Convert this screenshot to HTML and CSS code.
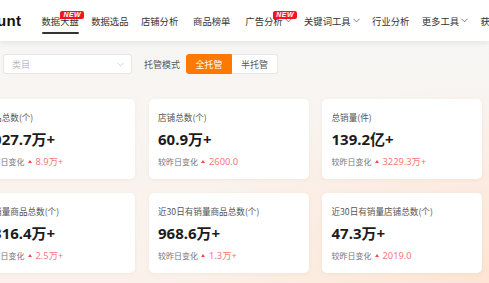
FILE: index.html
```html
<!DOCTYPE html>
<html lang="zh-CN">
<head>
<meta charset="utf-8">
<title>数据大盘</title>
<link rel="stylesheet" href="styles.css">
</head>
<body>
<header class="topbar">
  <div class="logo">unt</div>
  <span class="divider"></span>
  <nav class="nav">
    <a class="nav-item active">数据大盘<span class="badge">NEW</span></a>
    <a class="nav-item">数据选品</a>
    <a class="nav-item">店铺分析</a>
    <a class="nav-item wide">商品榜单</a>
    <a class="nav-item wide">广告分析<svg class="chev" viewBox="0 0 8 5"><polyline points="0.5,0.5 4,4 7.5,0.5"/></svg><span class="badge">NEW</span></a>
    <a class="nav-item">关键词工具<svg class="chev" viewBox="0 0 8 5"><polyline points="0.5,0.5 4,4 7.5,0.5"/></svg></a>
    <a class="nav-item">行业分析</a>
    <a class="nav-item">更多工具<svg class="chev" viewBox="0 0 8 5"><polyline points="0.5,0.5 4,4 7.5,0.5"/></svg></a>
    <a class="nav-item">获取插件</a>
  </nav>
</header>
<main class="content">
  <div class="filters">
    <div class="select"><span class="placeholder">类目</span><svg class="select-chev" viewBox="0 0 8 5"><polyline points="0.5,0.5 4,4 7.5,0.5"/></svg></div>
    <span class="filter-label">托管模式</span>
    <div class="seg">
      <span class="seg-btn active">全托管</span>
      <span class="seg-btn">半托管</span>
    </div>
  </div>
  <section class="stats">
    <div class="card">
      <div class="card-title">商品总数(个)</div>
      <div class="card-value">1027.7万+</div>
      <div class="card-change"><span class="change-label">较昨日变化</span><span class="up"></span><span class="change-value">8.9万+</span></div>
    </div>
    <div class="card">
      <div class="card-title">店铺总数(个)</div>
      <div class="card-value">60.9万+</div>
      <div class="card-change"><span class="change-label">较昨日变化</span><span class="up"></span><span class="change-value">2600.0</span></div>
    </div>
    <div class="card">
      <div class="card-title">总销量(件)</div>
      <div class="card-value">139.2亿+</div>
      <div class="card-change"><span class="change-label">较昨日变化</span><span class="up"></span><span class="change-value">3229.3万+</span></div>
    </div>
    <div class="card">
      <div class="card-title">有销量商品总数(个)</div>
      <div class="card-value">1316.4万+</div>
      <div class="card-change"><span class="change-label">较昨日变化</span><span class="up"></span><span class="change-value">2.5万+</span></div>
    </div>
    <div class="card">
      <div class="card-title">近30日有销量商品总数(个)</div>
      <div class="card-value">968.6万+</div>
      <div class="card-change"><span class="change-label">较昨日变化</span><span class="up"></span><span class="change-value">1.3万+</span></div>
    </div>
    <div class="card">
      <div class="card-title">近30日有销量店铺总数(个)</div>
      <div class="card-value">47.3万+</div>
      <div class="card-change"><span class="change-label">较昨日变化</span><span class="up"></span><span class="change-value">2019.0</span></div>
    </div>
  </section>
</main>
</body>
</html>
```

FILE: styles.css
```css
* { box-sizing: border-box; }
html, body {
  margin: 0;
  padding: 0;
  width: 489px;
  height: 283px;
  overflow: hidden;
}
body {
  font-family: "Noto Sans", "Noto Sans CJK SC", sans-serif;
  color: #333;
  background:
    radial-gradient(ellipse 320px 200px at 100% 100%, #fde4d3 0%, rgba(253, 228, 211, 0) 100%),
    linear-gradient(180deg, #f6f6f6 0px, #f8f5f2 90px, #fbf1ea 283px);
}

/* ---------- header ---------- */
.topbar {
  position: relative;
  z-index: 2;
  height: 41px;
  display: flex;
  align-items: center;
  background: #fff;
  box-shadow: 0 2px 5px rgba(0, 0, 0, 0.07);
  white-space: nowrap;
}
.logo {
  font-family: "Liberation Sans", "Noto Sans", sans-serif;
  font-weight: 700;
  font-size: 15px;
  line-height: 20px;
  color: #111;
  letter-spacing: 0.3px;
  margin-left: -3px;
  width: 23px;
}
.divider {
  width: 1px;
  height: 10px;
  background: #555;
  margin-left: 9px;
}
.nav {
  display: flex;
  align-items: center;
  height: 41px;
  margin-left: 12.5px;
  gap: 12.4px;
}
.nav-item {
  position: relative;
  display: flex;
  align-items: center;
  height: 41px;
  font-family: "Noto Sans CJK SC", sans-serif;
  font-size: 9.33px;
  color: #333;
  cursor: pointer;
}
.nav-item.wide { margin-left: 2.5px; }
.nav-item.active::after {
  content: "";
  position: absolute;
  left: 0;
  right: 0;
  bottom: 7px;
  height: 2px;
  background: #333;
  border-radius: 1px;
}
.chev {
  width: 7px;
  height: 5px;
  margin-left: 2px;
  fill: none;
  stroke: #555;
  stroke-width: 0.9;
}
.badge {
  position: absolute;
  top: 11px;
  right: -5.5px;
  width: 24px;
  height: 8px;
  background: #f5141e;
  color: #fff;
  border-radius: 2px 2px 2px 0;
  font-family: "Liberation Sans", sans-serif;
  font-weight: 700;
  font-style: italic;
  font-size: 7px;
  line-height: 8px;
  text-align: center;
  letter-spacing: 0.5px;
}

/* ---------- content ---------- */
.content {
  margin-left: -25px;
}
.filters {
  display: flex;
  align-items: center;
  padding-left: 28px;
  margin-top: 13px;
  height: 20px;
  font-family: "Noto Sans CJK SC", sans-serif;
}
.select {
  width: 129px;
  height: 20px;
  display: flex;
  align-items: center;
  justify-content: space-between;
  padding: 0 7px 0 8px;
  background: #fff;
  border: 1px solid #e6e6e6;
  border-radius: 3px;
}
.placeholder {
  font-size: 9px;
  color: #bdbdbd;
}
.select-chev {
  width: 7px;
  height: 5px;
  fill: none;
  stroke: #c4c4c4;
  stroke-width: 0.9;
}
.filter-label {
  margin-left: 12px;
  font-size: 9px;
  color: #555;
}
.seg {
  display: flex;
  margin-left: 6px;
  height: 20px;
}
.seg-btn {
  width: 46px;
  height: 20px;
  display: flex;
  align-items: center;
  justify-content: center;
  font-size: 9px;
  color: #555;
  background: #fff;
  border: 1px solid #e8e8e8;
  border-left: none;
  border-radius: 0 3px 3px 0;
}
.seg-btn.active {
  background: #ff7800;
  color: #fff;
  border: 1px solid #ff7800;
  border-radius: 3px 0 0 3px;
}

.stats {
  display: grid;
  grid-template-columns: repeat(3, 160px);
  column-gap: 13.5px;
  row-gap: 14px;
  margin-top: 25px;
}
.card {
  height: 80px;
  background: #fff;
  border-radius: 5px;
  padding: 12px 9.5px 0;
  box-shadow: 0 1px 4px rgba(120, 80, 40, 0.06);
  white-space: nowrap;
  overflow: hidden;
}
.card-title {
  font-family: "Noto Sans CJK SC", sans-serif;
  font-size: 8.6px;
  line-height: 12px;
  color: #555;
}
.card-value {
  margin-top: 6px;
  font-family: "Noto Sans", "Noto Sans CJK SC", sans-serif;
  font-weight: 700;
  font-size: 15px;
  line-height: 20px;
  color: #1c1c1c;
}
.card-change {
  margin-top: 7px;
  display: flex;
  align-items: center;
  height: 12px;
}
.change-label {
  font-family: "Noto Sans CJK SC", sans-serif;
  font-size: 8px;
  line-height: 12px;
  color: #777;
}
.up {
  width: 0;
  height: 0;
  margin: 0 4px 2px 3px;
  border-left: 2.5px solid transparent;
  border-right: 2.5px solid transparent;
  border-bottom: 3px solid #f04a4a;
}
.change-value {
  font-family: "Noto Sans", "Noto Sans CJK SC", sans-serif;
  font-size: 9.3px;
  line-height: 12px;
  color: #f87878;
}
```
